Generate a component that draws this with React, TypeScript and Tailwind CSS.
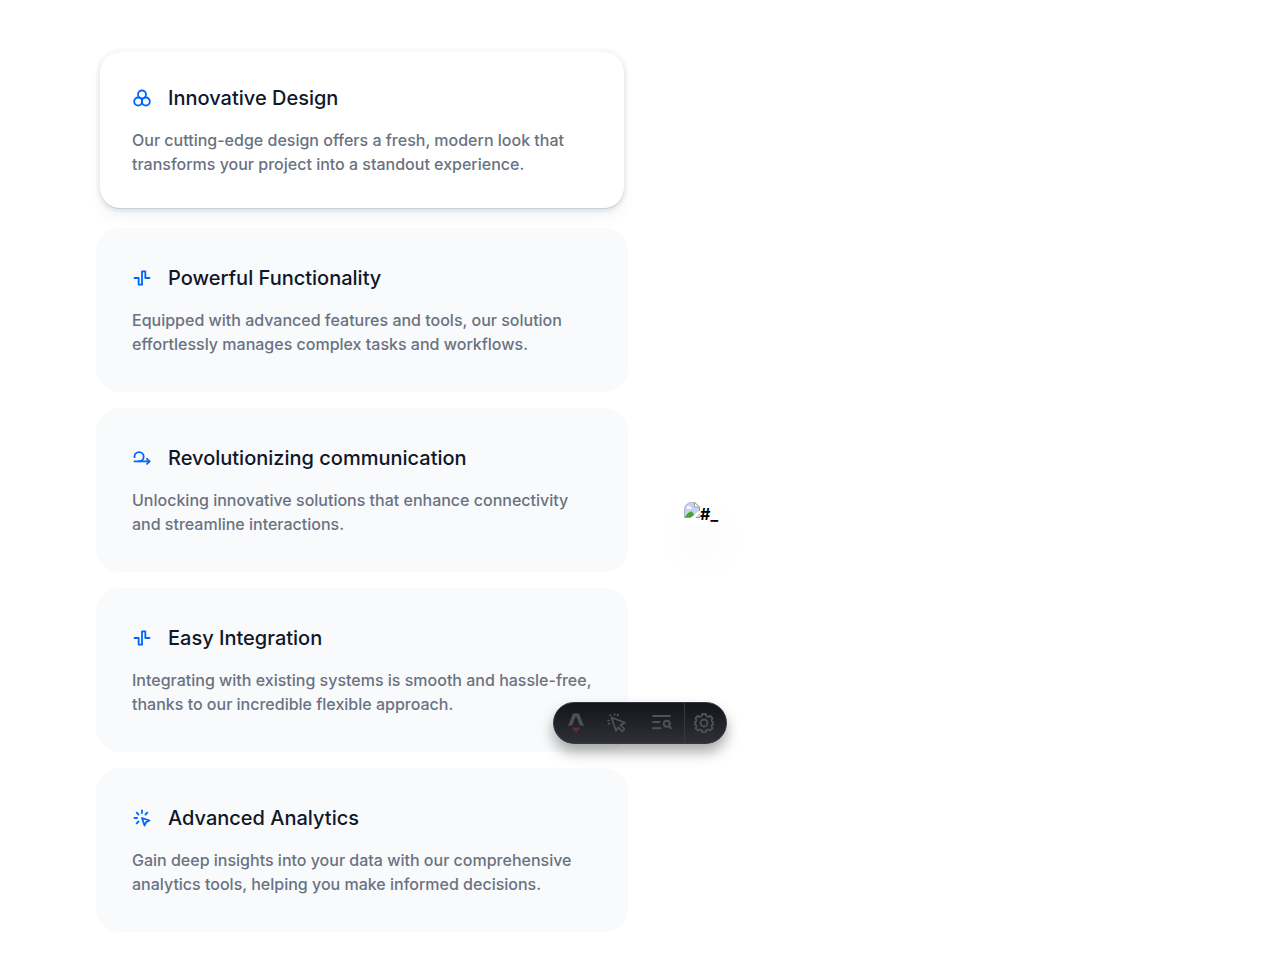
import { useState, type ReactNode } from 'react';

function LineIcon({ children }: { children: ReactNode }) {
  return (
    <svg
      className="size-5 shrink-0 text-[#0066ff]"
      viewBox="0 0 24 24"
      fill="none"
      stroke="currentColor"
      strokeWidth="2.2"
      strokeLinecap="round"
      strokeLinejoin="round"
      aria-hidden="true"
    >
      {children}
    </svg>
  );
}

const circles = (
  <LineIcon>
    <circle cx="12" cy="7.8" r="4.8" />
    <circle cx="7.4" cy="16.200" r="4.8" />
    <circle cx="16.600" cy="16.200" r="4.8" />
  </LineIcon>
);

const wave = (
  <LineIcon>
    <path d="M3 12h5v8h4v-16h4v8h5" />
  </LineIcon>
);

const iteration = (
  <LineIcon>
    <path d="M8.5 16a5.5 5.5 0 1 0 -5.5 -5.5v.5" />
    <path d="M3 16h18" />
    <path d="M18 13l3 3l-3 3" />
  </LineIcon>
);

const click = (
  <LineIcon>
    <path d="M3 12h3M12 3v3M7.8 7.8l-2.2 -2.2M16.2 7.8l2.2 -2.2M7.8 16.2l-2.2 2.2" />
    <path d="M12 12l9 3l-4 2l-2 4l-3 -9" />
  </LineIcon>
);

const features = [
  {
    icon: circles,
    title: 'Innovative Design',
    text: 'Our cutting-edge design offers a fresh, modern look that transforms your project into a standout experience.',
  },
  {
    icon: wave,
    title: 'Powerful Functionality',
    text: 'Equipped with advanced features and tools, our solution effortlessly manages complex tasks and workflows.',
  },
  {
    icon: iteration,
    title: 'Revolutionizing communication',
    text: 'Unlocking innovative solutions that enhance connectivity and streamline interactions.',
  },
  {
    icon: wave,
    title: 'Easy Integration',
    text: 'Integrating with existing systems is smooth and hassle-free, thanks to our incredible flexible approach.',
  },
  {
    icon: click,
    title: 'Advanced Analytics',
    text: 'Gain deep insights into your data with our comprehensive analytics tools, helping you make informed decisions.',
  },
];

function MissingImage() {
  return (
    <div className="flex h-6 items-start rounded-lg shadow-[0_25px_50px_0_rgba(0,0,0,0.06)]">
      <svg className="size-4 shrink-0" viewBox="0 0 16 16" aria-hidden="true">
        <path d="M0 8a8 8 0 0 1 8-8h3l5 5v11H0z" fill="#c3d3f5" />
        <path d="M0.500 16V8A7.500 7.500 0 0 1 8 .5h3" fill="none" stroke="#b4b8be" />
        <path d="M10.500.5v4.500h5z" fill="#fff" stroke="#9a9ea3" />
        <path d="M2.500 6c0-2 2.500-3 3.500-1 2 0 2 2 0 2H3.500z" fill="#fff" />
        <path d="M1 15c2-3.500 4-5.500 7-5.500l4 5.500z" fill="#4aa52e" />
        <path d="M16 8v3l-5 5H6.500z" fill="#fff" />
        <path d="M0 15.500h7M12 15.500h4M15.500 5v4" stroke="#8fa28c" />
      </svg>
      <span className="text-base leading-6 font-bold text-black">#_</span>
    </div>
  );
}

function DevToolbar() {
  return (
    <div
      role="toolbar"
      aria-label="Developer tools"
      className="fixed top-[702px] left-1/2 flex h-[42px] -translate-x-1/2 items-center overflow-hidden rounded-full border border-[#343841] bg-linear-to-b from-[#13151a] to-[#303136] text-[#515257] shadow-[0_8px_14px_rgba(0,0,0,0.34)]"
    >
      <button type="button" aria-label="Menu" className="flex h-full w-11 items-center justify-center">
        <svg className="h-5 w-4" viewBox="0 0 16 20" aria-hidden="true">
          <path
            d="M5 .5h6L16 13.200c-1.400-.7-2.800-1-4.200-1.200L8.300 3.500h-.6L4.200 12c-1.400.2-2.800.5-4.200 1.200z"
            fill="currentColor"
          />
          <path d="M4.200 14c2.200 1 5.400 1 7.600 0 .4 2-.5 3-1.800 3.600L8.300 20 6 17.700C4.700 17 4 15.500 4.200 14z" fill="#5b264f" />
        </svg>
      </button>
      <button type="button" aria-label="Inspect" className="flex h-full w-[38px] items-center justify-center">
        <svg
          className="size-5"
          viewBox="0 0 20 20"
          fill="none"
          stroke="currentColor"
          strokeWidth="1.7"
          strokeLinejoin="round"
          strokeLinecap="round"
          aria-hidden="true"
        >
          <path d="M4.500 4.500l13.500 5.200-4.500 2.300 4 4-2.300 2.300-4-4-2.200 3.700z" />
          <path d="M7.500 1v1M11 1.500l-.5 1M1 7.500h1M1.500 11l1-.5M3 2l.6.6" />
        </svg>
      </button>
      <button type="button" aria-label="Audit" className="flex h-full w-12 items-center justify-center pl-1">
        <svg
          className="size-5"
          viewBox="0 0 20 20"
          fill="none"
          stroke="currentColor"
          strokeWidth="1.9"
          strokeLinecap="round"
          aria-hidden="true"
        >
          <path d="M1 3h17M1 9h6.500M1 15.200h7.500" />
          <circle cx="14.800" cy="10.800" r="3" />
          <path d="M17 13.200l2 2.200" />
        </svg>
      </button>
      <button
        type="button"
        aria-label="Settings"
        className="flex h-full w-[42px] items-center justify-center border-l border-[#343841] pr-1"
      >
        <svg
          className="size-5"
          viewBox="0 0 20 20"
          fill="none"
          stroke="currentColor"
          strokeWidth="1.8"
          strokeLinejoin="round"
          aria-hidden="true"
        >
          <path d="M8.300 1h3.400l.6 2.100 2 .8 2-1 2.200 2.300-1 2 .7 1.600 1 .4v2l-1 .4-.7 1.600 1 2-2.200 2.300-2-1-2 .8-.6 2.100H8.300l-.6-2.100-2-.8-2 1-2.200-2.300 1-2-.7-1.600-1-.4v-2l1-.4.7-1.600-1-2L3.700 2.900l2 1 2-.8z" />
          <circle cx="10" cy="10" r="3.500" />
        </svg>
      </button>
    </div>
  );
}

export default function App() {
  const [active, setActive] = useState(0);
  return (
    <main className="min-h-screen bg-white px-24 py-12 font-['Inter',sans-serif]">
      <div className="grid grid-cols-2 gap-6">
        <div role="tablist" aria-label="Features" aria-orientation="vertical" className="flex flex-col gap-4">
          {features.map((feature, i) => (
            <button
              key={feature.title}
              type="button"
              role="tab"
              id={`feature-tab-${i}`}
              aria-selected={active === i}
              aria-controls="feature-panel"
              onClick={() => setActive(i)}
              className="rounded-3xl bg-[#f9fafb] p-1 text-left"
            >
              <span
                className={
                  active === i
                    ? 'block rounded-[20px] bg-white p-8 shadow-[0_0_1px_rgba(15,23,42,0.1),0_1px_1px_rgba(30,50,90,0.14),0_4px_6px_rgba(30,50,90,0.07),0_12px_16px_rgba(30,50,90,0.03)]'
                    : 'block rounded-[20px] p-8'
                }
              >
                <span className="flex items-center gap-4">
                  {feature.icon}
                  <span className="text-xl leading-7 font-medium text-[#0f172a]">{feature.title}</span>
                </span>
                <span className="mt-4 block text-base leading-6 font-medium text-gray-500">{feature.text}</span>
              </span>
            </button>
          ))}
        </div>
        <div
          role="tabpanel"
          id="feature-panel"
          aria-labelledby={`feature-tab-${active}`}
          className="flex items-center px-8 pt-12"
        >
          <MissingImage />
        </div>
      </div>
      <DevToolbar />
    </main>
  );
}
